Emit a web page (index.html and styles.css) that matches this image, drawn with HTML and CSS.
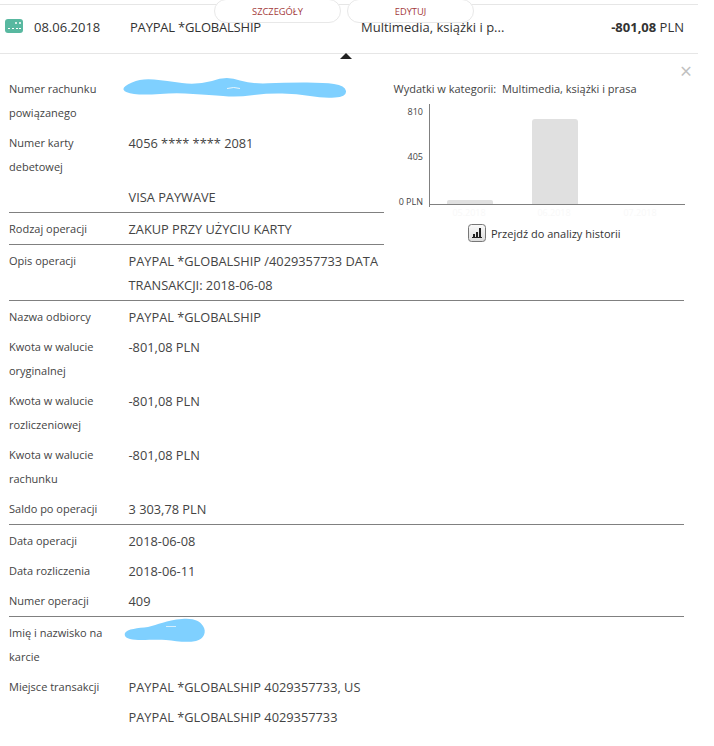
FILE: index.html
```html
<!DOCTYPE html>
<html lang="pl">
<head>
<meta charset="utf-8">
<title>Szczegóły operacji</title>
<link rel="stylesheet" href="styles.css">
</head>
<body>
<div class="page">
  <header class="summary">
    <svg class="card-icon" width="18" height="14" viewBox="0 0 18 14"><rect width="18" height="14" rx="3" fill="#58b8a0"/><rect x="10" y="3" width="2" height="2" rx="1" fill="#fff"/><rect x="14" y="3" width="2" height="2" rx="1" fill="#fff"/><rect x="3" y="9" width="2" height="1" fill="#fff"/><rect x="7" y="9" width="2" height="1" fill="#fff"/><rect x="11" y="9" width="2" height="1" fill="#fff"/><rect x="14" y="9" width="2" height="1" fill="#fff"/></svg>
    <span class="date">08.06.2018</span>
    <span class="payee">PAYPAL *GLOBALSHIP</span>
    <span class="category">Multimedia, książki i p...</span>
    <span class="amount"><b>-801,08</b> PLN</span>
    <nav class="tabs">
      <a class="tab tab-first">SZCZEGÓŁY</a>
      <a class="tab tab-second">EDYTUJ</a>
    </nav>
    <span class="caret"></span>
  </header>

  <main class="details">
    <span class="close">×</span>
    <div class="top">
      <div class="top-left">
        <section class="group">
          <div class="row"><div class="label">Numer rachunku powiązanego</div><div class="value"></div></div>
          <div class="row"><div class="label">Numer karty debetowej</div><div class="value">4056 **** **** 2081</div></div>
          <div class="row"><div class="label"></div><div class="value">VISA PAYWAVE</div></div>
        </section>
        <section class="group">
          <div class="row"><div class="label">Rodzaj operacji</div><div class="value">ZAKUP PRZY UŻYCIU KARTY</div></div>
        </section>
      </div>
      <aside class="chart">
        <div class="chart-title">Wydatki w kategorii:&nbsp; Multimedia, książki i prasa</div>
        <svg class="chart-svg" width="310" height="106" viewBox="0 0 310 106">
          <text class="tick" x="30" y="11" text-anchor="end">810</text>
          <text class="tick" x="30" y="56" text-anchor="end">405</text>
          <text class="tick" x="30" y="101" text-anchor="end">0 PLN</text>
          <path d="M54 101v-3a2 2 0 0 1 2-2h42a2 2 0 0 1 2 2v3z" fill="#e0e0e0"/>
          <path d="M139 101V18a3 3 0 0 1 3-3h40a3 3 0 0 1 3 3v83z" fill="#e0e0e0"/>
          <path d="M36.500 0V103M36 100.500H292" stroke="#808080" fill="none"/>
          <text class="xtick" x="76" y="112" text-anchor="middle">05.2018</text>
          <text class="xtick" x="161" y="112" text-anchor="middle">06.2018</text>
          <text class="xtick" x="247" y="112" text-anchor="middle">07.2018</text>
        </svg>
        <div class="history">
          <svg class="history-icon" width="18" height="18" viewBox="0 0 18 18"><defs><linearGradient id="btn" x1="0" y1="0" x2="0" y2="1"><stop offset="0" stop-color="#fafafa"/><stop offset="1" stop-color="#dcdcdc"/></linearGradient></defs><rect x=".5" y=".5" width="17" height="17" rx="3" fill="url(#btn)" stroke="#777"/><path d="M4 13.500h10" stroke="#222"/><path d="M5 10h2v3H5zM8 8h2v5H8zM11 4h2v9h-2z" fill="#222"/></svg>
          <span>Przejdź do analizy historii</span>
        </div>
      </aside>
    </div>
    <section class="group wide">
      <div class="row"><div class="label">Opis operacji</div><div class="value narrow">PAYPAL *GLOBALSHIP /4029357733 DATA TRANSAKCJI: 2018-06-08</div></div>
    </section>
    <section class="group wide">
      <div class="row"><div class="label">Nazwa odbiorcy</div><div class="value">PAYPAL *GLOBALSHIP</div></div>
      <div class="row"><div class="label">Kwota w walucie oryginalnej</div><div class="value">-801,08 PLN</div></div>
      <div class="row"><div class="label">Kwota w walucie rozliczeniowej</div><div class="value">-801,08 PLN</div></div>
      <div class="row"><div class="label">Kwota w walucie rachunku</div><div class="value">-801,08 PLN</div></div>
      <div class="row"><div class="label">Saldo po operacji</div><div class="value">3 303,78 PLN</div></div>
    </section>
    <section class="group wide">
      <div class="row"><div class="label">Data operacji</div><div class="value">2018-06-08</div></div>
      <div class="row"><div class="label">Data rozliczenia</div><div class="value">2018-06-11</div></div>
      <div class="row"><div class="label">Numer operacji</div><div class="value">409</div></div>
    </section>
    <section class="group wide last">
      <div class="row"><div class="label">Imię i nazwisko na karcie</div><div class="value"></div></div>
      <div class="row"><div class="label">Miejsce transakcji</div><div class="value">PAYPAL *GLOBALSHIP 4029357733, US</div></div>
      <div class="row"><div class="label"></div><div class="value">PAYPAL *GLOBALSHIP 4029357733</div></div>
    </section>
    <svg class="scribble scribble-account" width="228" height="26" viewBox="0 0 228 26"><path d="M12 7.500Q21.700 3.300 34 4.600Q46.700 6 62 8Q76.700 10 92 6Q106.700 0 120 5.600Q133 9 148 8.300Q163 7.700 183 7.500Q203 7.300 214 9Q225 10.700 226 16Q226.700 21.700 215 22.500Q203 23.300 190 21Q177 19 162 18.600Q147 18.300 132 20.300Q117 22.300 103 21Q90 20 73 19Q57 17.700 40 19Q23 20 14 19Q5 17.700 3.600 14.700Q2.300 11.700 12 7.500Z" fill="#7fd0ff"/><path d="M107 13.500q7-2 13 0" stroke="#e8f4fa" fill="none"/></svg>
    <svg class="scribble scribble-name" width="84" height="26" viewBox="0 0 84 26"><path d="M1 15C3 11 14 10 24 9C34 7 42 2 58 1C70 0 76 3 79 8C83 14 80 21 72 23C62 25 52 23 42 22C30 21 14 23 6 21C2 20 0 18 1 15Z" fill="#7fd0ff"/><path d="M42 8.500h10" stroke="#d6effc" fill="none"/></svg>
  </main>
</div>
</body>
</html>
```
FILE: styles.css
```css
* { box-sizing: border-box; }
html, body { margin: 0; background: #fff; }
body { font-family: "Open Sans", sans-serif; color: #444; }
.page { position: relative; width: 714px; height: 746px; overflow: hidden; }

.summary {
  position: relative;
  display: flex;
  align-items: center;
  width: 698px;
  height: 50px;
  margin-top: 4px;
  padding: 0 0 4px 5px;
  border-top: 1px solid #e6e6e6;
  border-bottom: 1px solid #e6e6e6;
  font-size: 13px;
  color: #333;
}
.card-icon { flex: none; margin: 0 11px 2px 0; }
.date { width: 96px; }
.payee { width: 231px; letter-spacing: -0.2px; }
.category { flex: 1; }
.amount { margin-right: 14px; }
.tabs { position: absolute; left: 214px; top: -6px; display: flex; }
.tab {
  display: block;
  height: 24px;
  padding-top: 5px;
  background: #fff;
  border: 1px solid #e8e8e8;
  border-radius: 22px;
  font-size: 9.300px;
  line-height: 13px;
  text-align: center;
  color: #a33a3a;
}
.tab-first { width: 127px; }
.tab-second { width: 127px; margin-left: 6px; }
.caret {
  position: absolute;
  left: 340px;
  bottom: -6px;
  border-left: 6px solid transparent;
  border-right: 6px solid transparent;
  border-bottom: 6px solid #222;
}

.details { position: relative; width: 684px; padding: 19px 0 0 9px; }
.close { position: absolute; left: 680px; top: 5px; font-size: 21px; line-height: 24px; color: #c0c0c0; }
.top { display: flex; }
.top-left { flex: none; width: 375px; }
.group { border-bottom: 1px solid #808080; padding-top: 1px; }
.group.last { border-bottom: 0; }
.row { display: flex; padding: 3px 0; line-height: 24px; }
.label { flex: none; width: 119.500px; font-size: 11px; color: #444; }
.value { font-size: 12.800px; color: #444; }
.value.narrow { width: 255px; }

.chart { flex: none; width: 300px; padding-left: 9px; }
.chart-title { margin: 6px 0 0 0.500px; font-size: 11px; line-height: 20px; }
.chart-svg { display: block; margin-top: 5px; overflow: visible; }
.tick { font-family: "Open Sans", sans-serif; font-size: 9px; fill: #444; }
.xtick { font-family: "Open Sans", sans-serif; font-size: 9px; fill: #f8f8f8; }
.history { display: flex; align-items: center; gap: 5px; margin: 14px 0 0 75px; font-size: 11px; color: #333; }
.history-icon { flex: none; }

.scribble { position: absolute; }
.scribble-account { left: 120px; top: 21px; }
.scribble-name { left: 124px; top: 564px; }
```
